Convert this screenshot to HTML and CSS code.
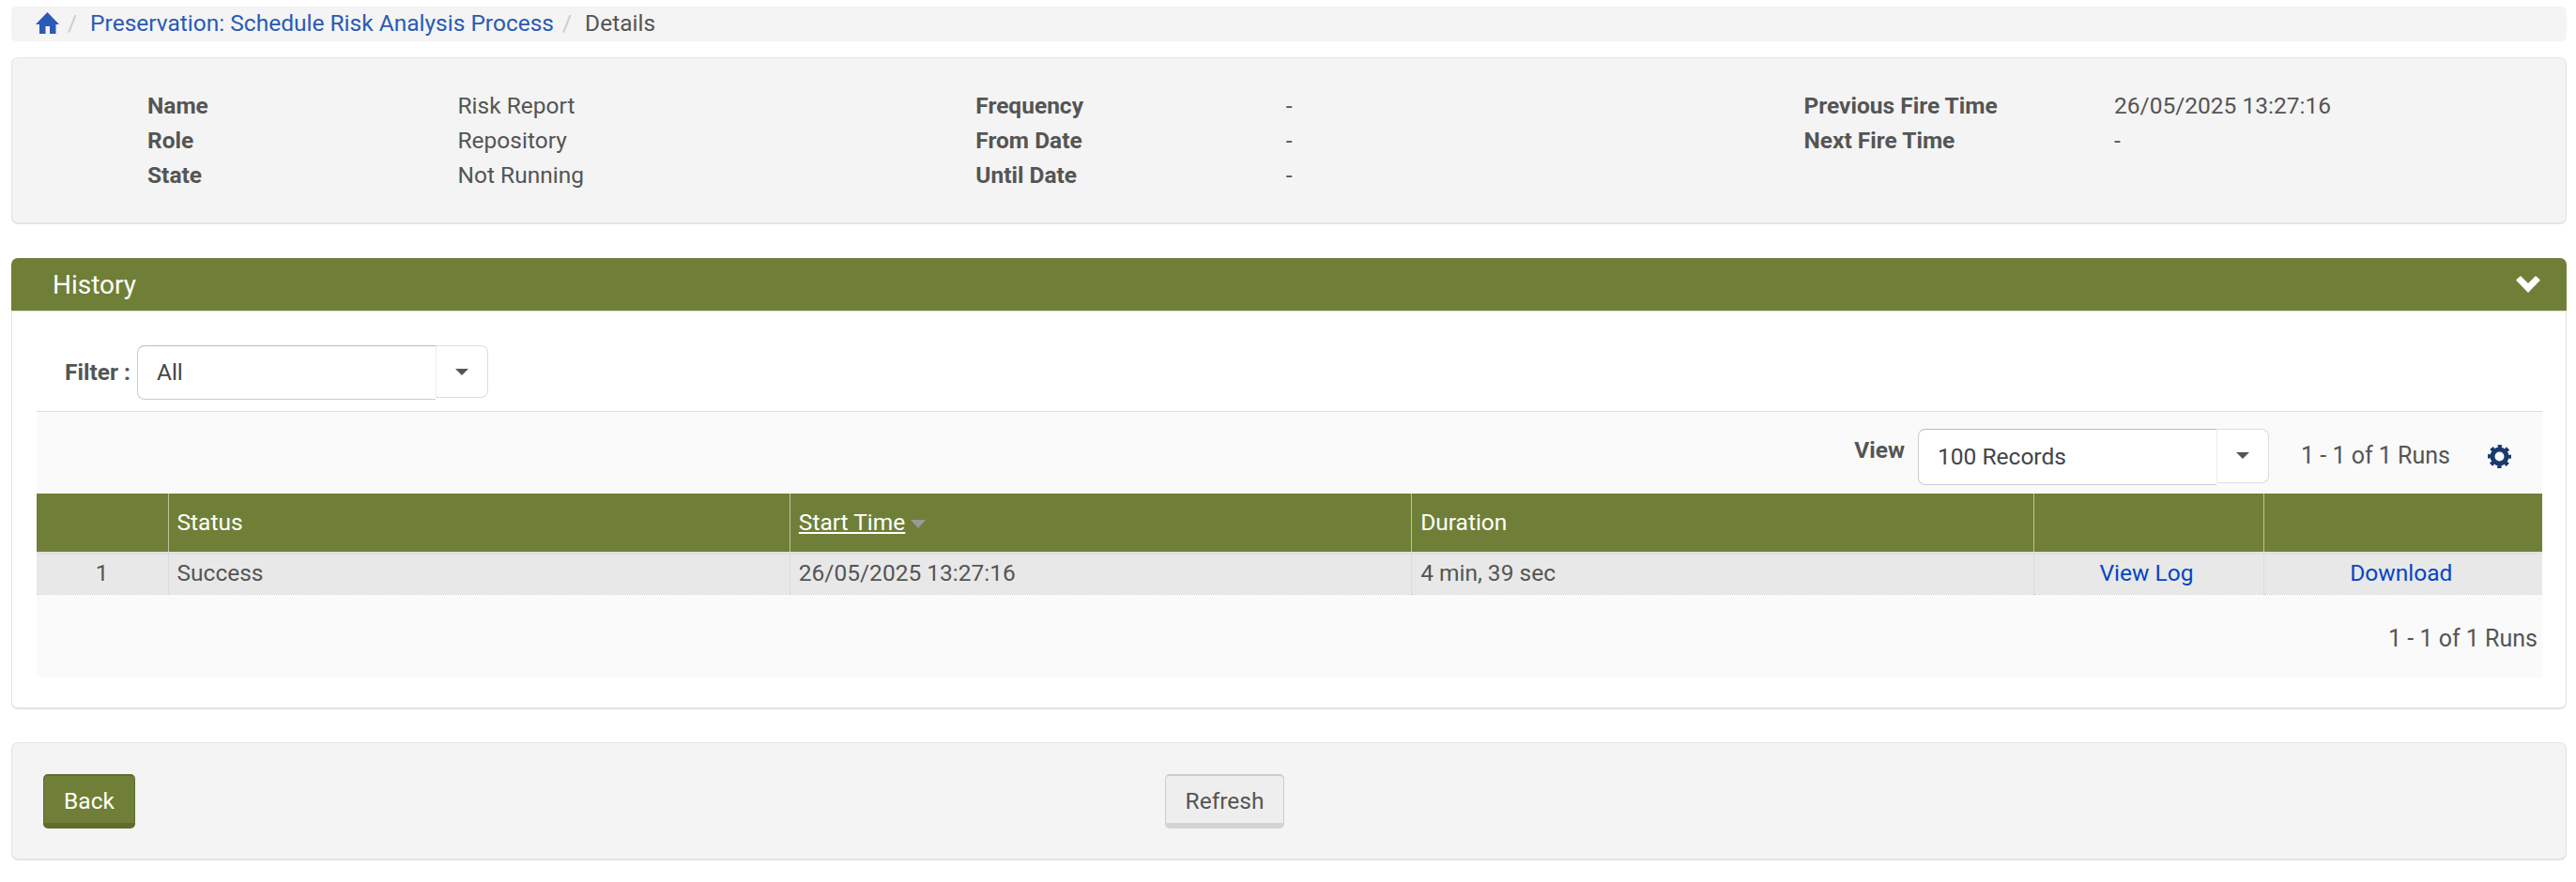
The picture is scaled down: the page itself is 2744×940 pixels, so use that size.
FILE: index.html
```html
<!DOCTYPE html>
<html lang="en">
<head>
  <meta charset="UTF-8" />
  <title>Details</title>
  <link rel="stylesheet" href="styles.css">
</head>
<body>

  <nav class="crumbs">
    <a href="#" class="crumb-home">
      <svg width="25" height="23" viewBox="0 0 25 23"><path fill="#2a5ab5" d="M12.500 0 25 13H21.500V23H15V15H10.500V23H4V13H0Z"/></svg>
    </a>
    <span class="crumb-sep">/</span>
    <a href="#">Preservation: Schedule Risk Analysis Process</a>
    <span class="crumb-sep">/</span>
    <span>Details</span>
  </nav>

  <section class="well info">
    <dl class="info-col">
      <dt>Name</dt><dd>Risk Report</dd>
      <dt>Role</dt><dd>Repository</dd>
      <dt>State</dt><dd>Not Running</dd>
    </dl>
    <dl class="info-col">
      <dt>Frequency</dt><dd>-</dd>
      <dt>From Date</dt><dd>-</dd>
      <dt>Until Date</dt><dd>-</dd>
    </dl>
    <dl class="info-col">
      <dt>Previous Fire Time</dt><dd>26/05/2025 13:27:16</dd>
      <dt>Next Fire Time</dt><dd>-</dd>
    </dl>
  </section>

  <section class="panel">
    <header class="panel-head">
      <h3>History</h3>
      <svg width="26" height="18" viewBox="0 0 26 18"><path fill="#fff" d="M0 4.500 5 0 13 8 21 0 26 4.500 13 18Z"/></svg>
    </header>
    <div class="panel-body">
      <div class="filter">
        <label>Filter :</label>
        <div class="select select-filter"><span>All</span><i class="select-btn"><b class="caret"></b></i></div>
      </div>
      <div class="toolbar">
        <label>View</label>
        <div class="select select-view"><span>100 Records</span><i class="select-btn"><b class="caret"></b></i></div>
        <span class="count">1 - 1 of 1 Runs</span>
        <svg class="gear" width="25" height="25" viewBox="0 0 25 25">
          <circle cx="12.500" cy="12.500" r="7.500" fill="none" stroke="#1a3a70" stroke-width="5"/>
          <circle cx="12.500" cy="12.500" r="10.500" fill="none" stroke="#1a3a70" stroke-width="4" stroke-dasharray="4.200 4.047" stroke-dashoffset="2.100"/>
        </svg>
      </div>
      <table class="runs">
        <thead>
          <tr>
            <th class="col-num"></th>
            <th>Status</th>
            <th><a href="#">Start Time</a><b class="sort"></b></th>
            <th>Duration</th>
            <th class="col-log"></th>
            <th class="col-dl"></th>
          </tr>
        </thead>
        <tbody>
          <tr>
            <td class="center">1</td>
            <td>Success</td>
            <td>26/05/2025 13:27:16</td>
            <td>4 min, 39 sec</td>
            <td class="center link-cell"><a href="#">View Log</a></td>
            <td class="center link-cell"><a href="#">Download</a></td>
          </tr>
        </tbody>
      </table>
      <div class="table-foot">1 - 1 of 1 Runs</div>
    </div>
  </section>

  <section class="well actions">
    <button class="btn btn-back">Back</button>
    <button class="btn btn-refresh">Refresh</button>
  </section>

</body>
</html>
```

FILE: styles.css
```css
body {
  margin: 0;
  padding: 7px 10px 23px 12px;
  background: #fff;
  font-family: 'Roboto', sans-serif;
  font-size: 24.5px;
  line-height: 36.75px;
  color: #555;
}

a {
  color: #0645c4;
  text-decoration: none;
}

.crumbs {
  display: flex;
  align-items: center;
  height: 37px;
  padding-left: 26px;
  background: #f4f4f4;
  border-radius: 5px;
}

.crumbs a {
  color: #2a5ab5;
}

.crumb-home {
  display: flex;
  margin-top: -2px;
}

.crumb-sep {
  margin: 0 14px 0 9px;
  color: #ccc;
}

.well {
  background: #f4f4f4;
  border: 1px solid #e3e3e3;
  border-top-color: #e8e8e8;
  border-bottom-width: 2px;
  border-radius: 7px;
  box-sizing: border-box;
}

.info {
  display: grid;
  grid-template-columns: repeat(3, 882.250px);
  height: 178px;
  margin-top: 17px;
  padding: 33px 0 0 144px;
}

.info-col {
  display: grid;
  grid-template-columns: 330.500px 1fr;
  grid-auto-rows: 37px;
  margin: 0;
}

.info-col dt {
  font-weight: 700;
}

.info-col dd {
  margin: 0;
}

.panel {
  height: 481px;
  margin-top: 36px;
  border: 1px solid #e3e3e3;
  border-bottom-width: 2px;
  border-radius: 7px;
  box-sizing: border-box;
}

.panel-head {
  display: flex;
  align-items: center;
  justify-content: space-between;
  height: 57px;
  margin: -1px -1px 0;
  padding: 0 28px 0 44px;
  box-sizing: border-box;
  background: #707f37;
  border-bottom: 1px solid #dcdcdc;
  border-radius: 7px 7px 0 0;
  color: #fff;
}

.panel-head h3 {
  margin: 0;
  padding-top: 3px;
  font-size: 28px;
  font-weight: 400;
}

.panel-body {
  padding: 36px 25px 0 26px;
}

.filter {
  display: flex;
  align-items: center;
  height: 58px;
  padding-left: 30px;
  margin-bottom: 12px;
}

.filter label {
  font-weight: 700;
  margin-right: 7px;
}

.select {
  display: flex;
  box-sizing: border-box;
  width: 374px;
  color: #444;
}

.select span {
  flex: 1;
  padding-left: 20px;
  background: #fff;
  border: 1px solid #ccc;
  border-top-color: #bbb;
  border-right: 0;
  border-radius: 8px 0 0 8px;
}

.select-filter {
  height: 58px;
  line-height: 56px;
}

.select-view {
  height: 60px;
  line-height: 58px;
  margin-left: 7px;
}

.select-btn {
  display: flex;
  align-items: center;
  justify-content: center;
  box-sizing: border-box;
  width: 56px;
  height: calc(100% - 2px);
  background: #fff;
  border: 1px solid #ddd;
  border-left-color: #eee;
  border-radius: 0 8px 8px 0;
}

.caret {
  border-top: 7px solid #555;
  border-left: 7px solid transparent;
  border-right: 7px solid transparent;
}

.toolbar {
  display: flex;
  align-items: center;
  height: 88px;
  padding: 8px 33px 0 0;
  justify-content: flex-end;
  box-sizing: border-box;
  background: #fafafa;
  border-top: 1px solid #d8dfe8;
}

.toolbar label {
  margin: -12px 7px 0 0;
  font-weight: 700;
}

.count {
  margin-left: 34px;
  margin-right: 40px;
  font-size: 25px;
}

.gear {
  margin-top: -1px;
}

.runs {
  width: 100%;
  table-layout: fixed;
  border-collapse: collapse;
}

.runs th {
  height: 62px;
  padding: 0 9px;
  box-sizing: border-box;
  background: #707f37;
  border-left: 1px solid #bcc3a0;
  color: #fff;
  font-weight: 400;
  text-align: left;
}

.runs th:first-child {
  border-left: 0;
}

.runs th a {
  color: #fff;
  text-decoration: underline;
}

.sort {
  display: inline-block;
  margin-left: 6px;
  vertical-align: middle;
  border-top: 9px solid #999;
  border-left: 8px solid transparent;
  border-right: 8px solid transparent;
}

.col-num { width: 140px; }
.col-log { width: 245px; }
.col-dl { width: 297px; }

.runs td {
  height: 45px;
  padding: 3px 9px 0;
  box-sizing: border-box;
  background: #e8e8e8;
  border-left: 1px solid #dcdcdc;
  border-bottom: 1px dotted #ccc;
  box-shadow: inset 0 3px 0 #e0e0e0;
}

.runs td:first-child {
  border-left: 0;
}

.runs td.link-cell {
  padding: 3px 11px 0 7px;
}

.center {
  text-align: center;
}

.table-foot {
  height: 88px;
  padding: 29px 5px 0 0;
  box-sizing: border-box;
  background: #fafafa;
  font-size: 25px;
  text-align: right;
}

.actions {
  display: flex;
  height: 126px;
  margin-top: 35px;
  padding: 33px 0 0 33px;
}

.btn {
  height: 58px;
  padding: 2px 0 0;
  font-family: inherit;
  font-size: 24.500px;
  border-radius: 5px;
  box-sizing: border-box;
}

.btn-back {
  width: 98px;
  background: #707f37;
  color: #fff;
  border: 1px solid #5f6c2e;
  border-top-width: 2px;
  border-bottom: 6px solid #5f6c2e;
}

.btn-refresh {
  width: 127px;
  margin-left: 1097px;
  background: #eee;
  color: #555;
  border: 1px solid #ccc;
  border-top-width: 2px;
  border-bottom: 6px solid #d4d4d4;
}
```
